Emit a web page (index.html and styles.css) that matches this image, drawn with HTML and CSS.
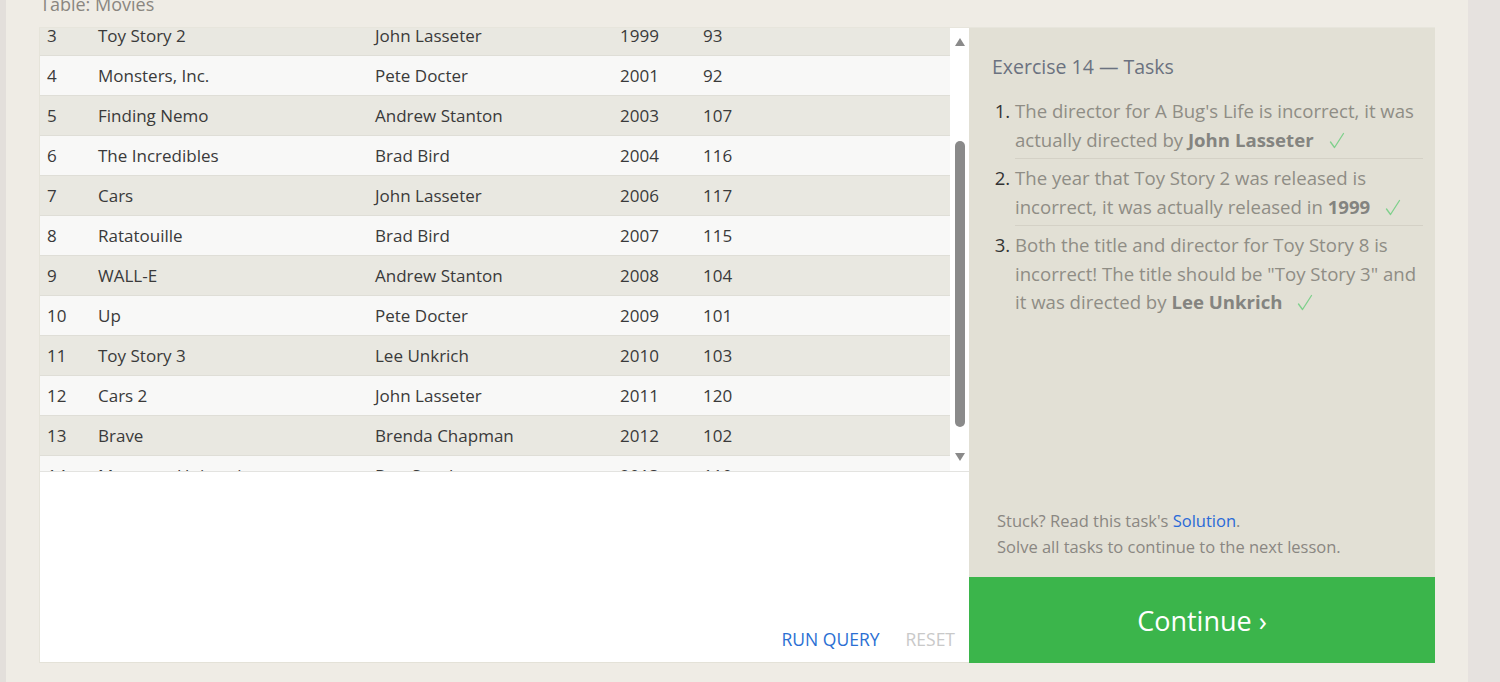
FILE: index.html
```html
<!DOCTYPE html>
<html lang="en">
<head>
<meta charset="utf-8">
<title>SQL Lesson 14</title>
<link rel="stylesheet" href="styles.css">
</head>
<body>
<div class="page">
  <div class="edge-left"></div>
  <main class="main">
    <div class="caption">Table: Movies</div>
    <section class="card">
      <div class="query">
        <div class="results">
          <div class="viewport">
            <div class="rows">
              <div class="row"><span>1</span><span>Toy Story</span><span>John Lasseter</span><span>1995</span><span>81</span></div>
              <div class="row"><span>2</span><span>A Bug's Life</span><span>John Lasseter</span><span>1998</span><span>95</span></div>
              <div class="row"><span>3</span><span>Toy Story 2</span><span>John Lasseter</span><span>1999</span><span>93</span></div>
              <div class="row"><span>4</span><span>Monsters, Inc.</span><span>Pete Docter</span><span>2001</span><span>92</span></div>
              <div class="row"><span>5</span><span>Finding Nemo</span><span>Andrew Stanton</span><span>2003</span><span>107</span></div>
              <div class="row"><span>6</span><span>The Incredibles</span><span>Brad Bird</span><span>2004</span><span>116</span></div>
              <div class="row"><span>7</span><span>Cars</span><span>John Lasseter</span><span>2006</span><span>117</span></div>
              <div class="row"><span>8</span><span>Ratatouille</span><span>Brad Bird</span><span>2007</span><span>115</span></div>
              <div class="row"><span>9</span><span>WALL-E</span><span>Andrew Stanton</span><span>2008</span><span>104</span></div>
              <div class="row"><span>10</span><span>Up</span><span>Pete Docter</span><span>2009</span><span>101</span></div>
              <div class="row"><span>11</span><span>Toy Story 3</span><span>Lee Unkrich</span><span>2010</span><span>103</span></div>
              <div class="row"><span>12</span><span>Cars 2</span><span>John Lasseter</span><span>2011</span><span>120</span></div>
              <div class="row"><span>13</span><span>Brave</span><span>Brenda Chapman</span><span>2012</span><span>102</span></div>
              <div class="row"><span>14</span><span>Monsters University</span><span>Dan Scanlon</span><span>2013</span><span>110</span></div>
            </div>
          </div>
          <div class="scrollbar">
            <span class="arrow up"></span>
            <span class="thumb"></span>
            <span class="arrow down"></span>
          </div>
        </div>
        <div class="actions">
          <button class="btn run">RUN QUERY</button>
          <button class="btn reset">RESET</button>
        </div>
      </div>
      <aside class="tasks">
        <div class="tasks-body">
          <h2 class="tasks-title">Exercise 14 — Tasks</h2>
          <ol class="task-list">
            <li>The director for A Bug's Life is incorrect, it was actually directed by <b>John Lasseter</b><svg class="check" viewBox="0 0 16 17" width="16" height="17"><polyline points="1.5,10 5.5,15.5 14.5,1.5"/></svg></li>
            <li>The year that Toy Story 2 was released is incorrect, it was actually released in <b>1999</b><svg class="check" viewBox="0 0 16 17" width="16" height="17"><polyline points="1.5,10 5.5,15.5 14.5,1.5"/></svg></li>
            <li>Both the title and director for Toy Story 8 is incorrect! The title should be "Toy Story 3" and it was directed by <b>Lee Unkrich</b><svg class="check" viewBox="0 0 16 17" width="16" height="17"><polyline points="1.5,10 5.5,15.5 14.5,1.5"/></svg></li>
          </ol>
        </div>
        <p class="stuck">Stuck? Read this task's <a href="#">Solution</a>.<br>Solve all tasks to continue to the next lesson.</p>
        <a class="continue" href="#">Continue ›</a>
      </aside>
    </section>
  </main>
  <div class="edge-right"></div>
</div>
</body>
</html>
```

FILE: styles.css
```css
* { box-sizing: border-box; }

html, body {
  margin: 0;
  padding: 0;
  height: 100%;
}

body {
  font-family: "Open Sans", "Noto Sans", sans-serif;
  background: #efece5;
  overflow: hidden;
}

.page {
  display: flex;
  height: 682px;
}

.edge-left {
  width: 6px;
  background: #e3dfdb;
}

.edge-right {
  width: 32px;
  background: #e6e2df;
}

.main {
  flex: 1;
  padding: 0 33px;
  background: #efece5;
}

.caption {
  margin-top: -6px;
  height: 33px;
  padding-left: 1px;
  font-size: 18px;
  line-height: 20px;
  color: #8a8680;
}

.card {
  display: flex;
  height: 636px;
  border-top: 1px solid #e7e5dc;
}

.query {
  width: 930px;
  display: flex;
  flex-direction: column;
  background: #ffffff;
  border-left: 1px solid #e6e4da;
  border-bottom: 1px solid #e4e2d8;
}

.results {
  display: flex;
  height: 444px;
  border-bottom: 1px solid #e3e3e0;
}

.viewport {
  width: 910px;
  overflow: hidden;
}

.rows {
  margin-top: -92px;
}

.row {
  display: grid;
  grid-template-columns: 51px 277px 245px 83px 1fr;
  align-items: center;
  height: 40px;
  padding-left: 7px;
  border-bottom: 1px solid #dfded7;
  background: #f8f8f7;
  color: #3a3a3a;
  font-size: 17px;
}

.row:nth-child(odd) {
  background: #e9e8e1;
}

.scrollbar {
  width: 19px;
  display: flex;
  flex-direction: column;
  align-items: center;
  background: #ffffff;
  padding: 10px 0 0;
}

.arrow {
  width: 0;
  height: 0;
  border-left: 5px solid transparent;
  border-right: 5px solid transparent;
}

.arrow.up {
  border-bottom: 8px solid #8a8a8a;
}

.arrow.down {
  border-top: 8px solid #8a8a8a;
}

.thumb {
  width: 10px;
  height: 286px;
  margin: 95px 0 26px;
  background: #8a8a8a;
  border-radius: 5px;
}

.actions {
  flex: 1;
  display: flex;
  justify-content: flex-end;
  align-items: flex-end;
  gap: 26px;
  padding: 0 14px 11px 0;
}

.btn {
  border: 0;
  background: none;
  padding: 0;
  font-family: "Open Sans", sans-serif;
  font-size: 17.5px;
  line-height: 24px;
  cursor: pointer;
}

.btn.run { color: #2b6fd3; }
.btn.reset { color: #c9c9c9; }

.tasks {
  width: 466px;
  display: flex;
  flex-direction: column;
  background: #e2e0d5;
}

.tasks-body {
  flex: 1;
  padding: 25px 12px 0 23px;
}

.tasks-title {
  margin: 0 0 11px;
  font-size: 19.5px;
  font-weight: 400;
  line-height: 28px;
  color: #6b7280;
}

.task-list {
  margin: 0;
  padding-left: 23px;
  color: #8f8d85;
  font-size: 18.6px;
  line-height: 28.5px;
}

.task-list li {
  padding: 5px 0 4px;
  border-bottom: 1px solid #d4d1c6;
}

.task-list li:last-child {
  border-bottom: 0;
}

.task-list li::marker {
  color: #333333;
}

.task-list b {
  color: #848480;
  font-weight: 700;
}

.check {
  margin-left: 15px;
  vertical-align: -2px;
  fill: none;
  stroke: #7fd08c;
  stroke-width: 1.3;
  stroke-linecap: round;
  stroke-linejoin: round;
}

.stuck {
  margin: 0;
  padding: 0 12px 17px 28px;
  font-size: 16.5px;
  line-height: 26px;
  color: #8a8782;
}

.stuck a {
  color: #2a6ad8;
  text-decoration: none;
}

.continue {
  display: flex;
  align-items: center;
  justify-content: center;
  height: 86px;
  background: #3bb54b;
  color: #ffffff;
  font-size: 27px;
  text-decoration: none;
}
```
